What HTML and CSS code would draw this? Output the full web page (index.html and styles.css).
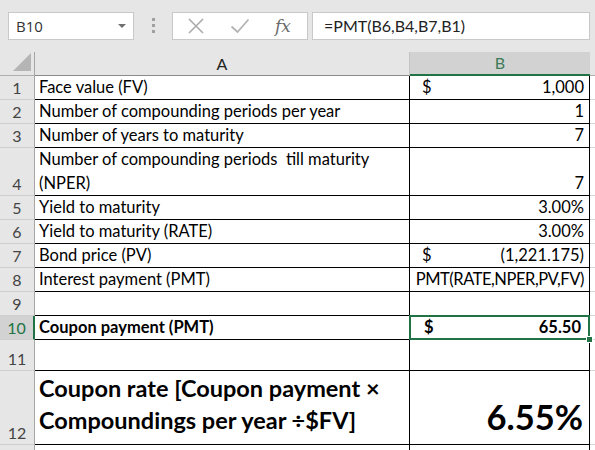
FILE: index.html
```html
<!DOCTYPE html>
<html>
<head>
<meta charset="utf-8">
<link rel="stylesheet" href="styles.css">
</head>
<body>
<div class="app">
  <div class="toolbar">
    <div class="namebox">
      <span class="name">B10</span>
      <svg class="dd" width="8" height="5" viewBox="0 0 8 5"><polygon points="0,0 8,0 4,4" fill="#707070"/></svg>
    </div>
    <div class="dots"><i></i><i></i><i></i></div>
    <div class="fxbox">
      <svg class="ic" width="18" height="16" viewBox="0 0 18 16"><path d="M2 1 L16 15 M16 1 L2 15" stroke="#ababab" stroke-width="1.6" fill="none"/></svg>
      <svg class="ic" width="20" height="16" viewBox="0 0 20 16"><path d="M1.5 8.5 L7.5 14 L18.5 1.5" stroke="#b3b3b3" stroke-width="1.8" fill="none"/></svg>
      <span class="fx">fx</span>
    </div>
    <div class="formula">=PMT(B6,B4,B7,B1)</div>
  </div>

  <div class="sheet">
    <div class="row hdr">
      <div class="rh corner"><svg width="19" height="19" viewBox="0 0 19 19"><polygon points="18,0 18,18 0,18" fill="#b5b5b5"/></svg></div>
      <div class="ch">A</div>
      <div class="ch sel">B</div>
    </div>

    <div class="row r24"><div class="rh">1</div><div class="ca">Face value (FV)</div><div class="cb acct"><span>$</span><span>1,000</span></div></div>
    <div class="row r24"><div class="rh">2</div><div class="ca">Number of compounding periods per year</div><div class="cb">1</div></div>
    <div class="row r24"><div class="rh">3</div><div class="ca">Number of years to maturity</div><div class="cb">7</div></div>
    <div class="row r48"><div class="rh">4</div><div class="ca wrap">Number of compounding periods&nbsp; till maturity<br>(NPER)</div><div class="cb">7</div></div>
    <div class="row r24"><div class="rh">5</div><div class="ca">Yield to maturity</div><div class="cb">3.00%</div></div>
    <div class="row r24"><div class="rh">6</div><div class="ca">Yield to maturity (RATE)</div><div class="cb">3.00%</div></div>
    <div class="row r24"><div class="rh">7</div><div class="ca">Bond price (PV)</div><div class="cb acct"><span>$</span><span>(1,221.175)</span></div></div>
    <div class="row r24"><div class="rh">8</div><div class="ca">Interest payment (PMT)</div><div class="cb fit">PMT(RATE,NPER,PV,FV)</div></div>
    <div class="row r24"><div class="rh">9</div><div class="ca"></div><div class="cb"></div></div>
    <div class="row r24"><div class="rh rsel">10</div><div class="ca bold">Coupon payment (PMT)</div><div class="cb acct bold active"><span>$</span><span>65.50</span><i class="handle"></i></div></div>
    <div class="row r31"><div class="rh">11</div><div class="ca"></div><div class="cb"></div></div>
    <div class="row r74"><div class="rh">12</div><div class="ca big">Coupon rate [Coupon payment ×<br>Compoundings per year ÷$FV]</div><div class="cb huge">6.55%</div></div>
    <div class="row r24 last"><div class="rh"></div><div class="ca"></div><div class="cb"></div></div>
  </div>
</div>
</body>
</html>
```

FILE: styles.css
```css
html, body {
  margin: 0;
  padding: 0;
  background: #ffffff;
}
.app {
  width: 595px;
  height: 450px;
  overflow: hidden;
  font-family: "Lato", "Open Sans", sans-serif;
}
.toolbar {
  height: 52px;
  background: #e6e6e6;
  display: flex;
  align-items: flex-start;
  padding-top: 12px;
  box-sizing: border-box;
}
.namebox {
  margin-left: 8px;
  width: 126px;
  height: 28px;
  box-sizing: border-box;
  background: #fff;
  border: 1px solid #c9c9c9;
  display: flex;
  align-items: center;
  justify-content: space-between;
  padding: 0 7px 0 7px;
}
.name {
  font-family: "Open Sans", sans-serif;
  font-size: 15px;
  color: #333;
}
.dd { margin-top: 1px; }
.dots {
  width: 38px;
  display: flex;
  flex-direction: column;
  align-items: center;
  gap: 3px;
  padding-top: 6px;
}
.dots i {
  display: block;
  width: 3px;
  height: 3px;
  background: #a0a0a0;
}
.fxbox {
  width: 136px;
  height: 28px;
  box-sizing: border-box;
  background: #fff;
  border: 1px solid #c9c9c9;
  display: flex;
  align-items: center;
  padding-left: 14px;
  gap: 25px;
}
.fxbox .ic { display: block; }
.fx {
  font-family: "DejaVu Serif", "Liberation Serif", serif;
  font-style: italic;
  font-size: 17px;
  color: #6a6a6a;
}
.formula {
  margin-left: 4px;
  width: 278px;
  height: 28px;
  box-sizing: border-box;
  background: #fff;
  border: 1px solid #c9c9c9;
  padding-left: 11px;
  font-size: 16px;
  line-height: 26px;
  color: #222;
}

.sheet {
  display: flex;
  flex-direction: column;
}
.row {
  display: grid;
  grid-template-columns: 35px 375px 180px 5px;
  box-sizing: border-box;
}
.row::after {
  content: "";
  border-bottom: 1px solid #d4d4d4;
}
.hdr { height: 24px; background: #e6e6e6; }
.hdr::after { border-bottom: 1px solid #b0b0b0; }
.r24 { height: 24px; }
.r48 { height: 48px; }
.r31 { height: 31px; }
.r74 { height: 74px; }
.last::after { border-bottom: none; }

.rh {
  background: #e6e6e6;
  border-right: 1px solid #a6a6a6;
  border-bottom: 1px solid #cfcfcf;
  color: #444;
  font-size: 16px;
  line-height: 23px;
  display: flex;
  align-items: flex-end;
  justify-content: center;
  box-sizing: border-box;
}
.corner {
  align-items: flex-end;
  justify-content: flex-end;
  padding: 0 2px 3px 0;
  border-bottom: 1px solid #b0b0b0;
}
.rsel {
  background: #d2d2d2;
  color: #217346;
  border-right: 2px solid #217346;
}
.ch {
  border-right: 1px solid #c3c3c3;
  border-bottom: 1px solid #8a8a8a;
  color: #222;
  font-size: 16px;
  line-height: 23px;
  text-align: center;
  box-sizing: border-box;
}
.ch.sel {
  background: #d2d2d2;
  color: #3d7a58;
  border-bottom: 2px solid #217346;
  border-right: none;
  line-height: 22px;
}
.ca, .cb {
  border-bottom: 1px solid #000;
  border-right: 1px solid #000;
  box-sizing: border-box;
  font-size: 16.5px;
  line-height: 23px;
  color: #000;
  white-space: nowrap;
  overflow: hidden;
}
.ca {
  padding-left: 4px;
  display: flex;
  align-items: flex-end;
}
.ca.wrap {
  display: block;
  line-height: 23.5px;
}
.cb {
  padding-right: 5px;
  display: flex;
  align-items: flex-end;
  justify-content: flex-end;
}
.cb.acct {
  justify-content: space-between;
  padding-left: 12px;
}
.cb.fit { padding-right: 5px; letter-spacing: -0.45px; }
.bold { font-weight: 700; }
.cb.active {
  position: relative;
  overflow: visible;
  padding-left: 14px;
  padding-right: 8px;
}
.cb.active::before {
  content: "";
  position: absolute;
  left: -1px;
  top: -1px;
  right: -1px;
  bottom: -1px;
  border: 2px solid #217346;
  pointer-events: none;
}
.handle {
  position: absolute;
  right: -4px;
  bottom: -4px;
  width: 5px;
  height: 5px;
  background: #217346;
  border: 1px solid #fff;
}
.ca.big {
  display: block;
  font-weight: 700;
  font-size: 23.5px;
  line-height: 32px;
  padding-top: 1px;
}
.cb.huge {
  font-weight: 700;
  font-size: 34.5px;
  line-height: 40px;
  padding-bottom: 7px;
  padding-right: 6px;
}
.last .ca, .last .cb { border-bottom: none; border-right: 1px solid #000; }
```
